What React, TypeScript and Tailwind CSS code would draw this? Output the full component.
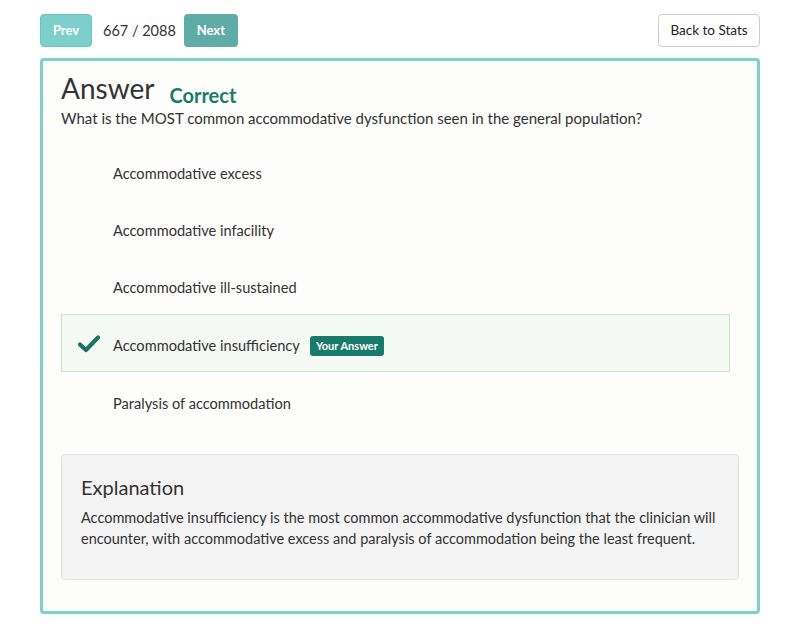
import React from "react";

const options = [
  "Accommodative excess",
  "Accommodative infacility",
  "Accommodative ill-sustained",
  "Accommodative insufficiency",
  "Paralysis of accommodation",
];

const selected = 3;

export default function App() {
  return (
    <div
      className="min-h-[637px] bg-white px-10 pt-[14px] text-[#333]"
      style={{ fontFamily: "Lato, 'Open Sans', sans-serif" }}
    >
      {/* Top bar */}
      <div className="flex items-center justify-between">
        <div className="flex items-center">
          <button className="h-[33px] w-[52px] rounded border border-[#6cc4c1] bg-[#7dcfcc] text-[13px] font-bold text-white">
            Prev
          </button>
          <span className="ml-[11px] mr-[8px] text-[14.5px] text-[#333]">667 / 2088</span>
          <button className="h-[33px] w-[54px] rounded bg-[#5eaba7] text-[13px] font-bold text-white">
            Next
          </button>
        </div>
        <button className="h-[33px] w-[102px] rounded border border-[#cccccc] bg-white text-[13.5px] text-[#222]">
          Back to Stats
        </button>
      </div>

      {/* Card */}
      <div className="mt-[11px] rounded border-[3px] border-[#7ecfcc] bg-[#fdfdfb] px-[18px] pb-[31px] pt-[9px]">
        <div className="flex items-end">
          <h1 className="mb-[2px] text-[28px] leading-[36px] text-[#333]">Answer</h1>
          <span className="mb-[-2px] ml-[15px] text-[20px] font-bold text-[#1b7a69]">Correct</span>
        </div>
        <p className="text-[15px] leading-[20px] text-[#333]">
          What is the MOST common accommodative dysfunction seen in the general population?
        </p>

        <div className="mt-[17px] w-[669px]">
          {options.map((o, i) => (
            <div
              key={o}
              className={
                i === selected
                  ? "-mt-[2px] mb-[3px] flex h-[58px] items-center border border-[#c6e6c0] bg-[#f4f9f3] pt-[6px]"
                  : "flex h-[57px] items-center border border-transparent"
              }
            >
              <div className="flex w-[51px] justify-center pl-[3px]">
                {i === selected && (
                  <svg width="22" height="18" viewBox="0 0 22 18" className="-mt-[4px]">
                    <path
                      d="M2 9.5 L8 15 L20 2.5"
                      fill="none"
                      stroke="#1b7566"
                      strokeWidth="4.2"
                      strokeLinecap="round"
                      strokeLinejoin="round"
                    />
                  </svg>
                )}
              </div>
              <span className="text-[14.6px] text-[#333]">{o}</span>
              {i === selected && (
                <span className="ml-[10px] rounded-[3px] bg-[#177a6a] px-[6px] py-[2px] text-[11px] font-bold text-white">
                  Your Answer
                </span>
              )}
            </div>
          ))}
        </div>

        {/* Explanation */}
        <div className="mt-[22px] w-[678px] rounded border border-[#e3e3e3] bg-[#f4f4f4] px-[19px] pb-[30px] pt-[18px]">
          <h2 className="text-[20px] leading-[28px] text-[#333]">Explanation</h2>
          <p className="mt-[6px] text-[14.5px] leading-[21px] text-[#333]">
            Accommodative insufficiency is the most common accommodative dysfunction that the clinician will
            encounter, with accommodative excess and paralysis of accommodation being the least frequent.
          </p>
        </div>
      </div>
    </div>
  );
}
